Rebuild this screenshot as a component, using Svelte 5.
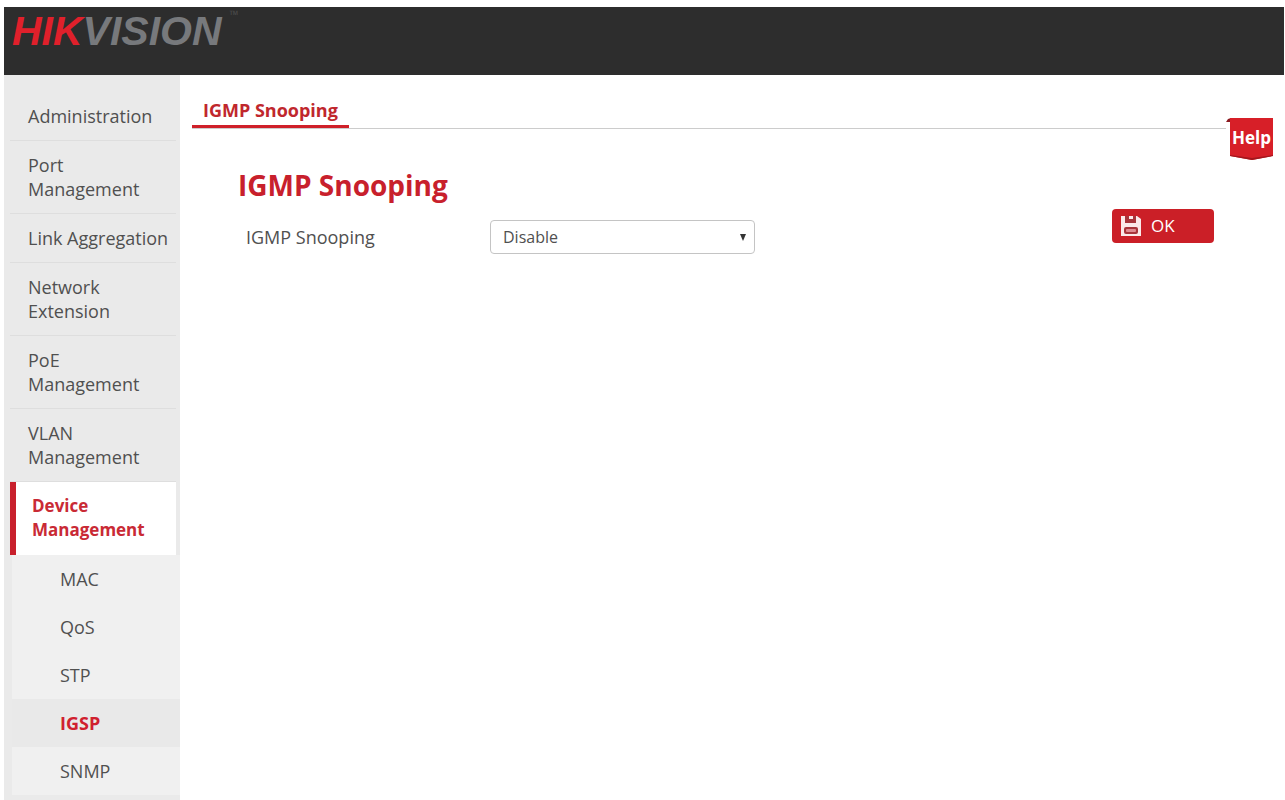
<script>
	let active = "Device Management";
	let activeSub = "IGSP";
	let snooping = "Disable";

	const menu = [
		{ label: "Administration" },
		{ label: "Port Management" },
		{ label: "Link Aggregation" },
		{ label: "Network Extension" },
		{ label: "PoE Management" },
		{ label: "VLAN Management" },
		{
			label: "Device Management",
			children: ["MAC", "QoS", "STP", "IGSP", "SNMP"],
		},
	];
</script>

<div class="page">
	<header>
		<span class="logo"><span class="hik">HIK</span>VISION</span>
		<span class="tm">™</span>
	</header>

	<div class="body">
		<nav class="sidebar">
			<ul class="menu">
				{#each menu as item (item.label)}
					<li>
						<a
							href="#menu"
							class="item"
							class:active={item.label === active}
							on:click|preventDefault={() => (active = item.label)}
						>
							{item.label}
						</a>
						{#if item.children && item.label === active}
							<ul class="submenu">
								{#each item.children as child (child)}
									<li>
										<a
											href="#submenu"
											class:current={child === activeSub}
											on:click|preventDefault={() => (activeSub = child)}
										>
											{child}
										</a>
									</li>
								{/each}
							</ul>
						{/if}
					</li>
				{/each}
			</ul>
		</nav>

		<main>
			<div class="top">
				<div class="tabs">
					<a href="#igmp" class="tab">IGMP Snooping</a>
				</div>
				<button class="help" type="button">
					<svg viewBox="0 0 47 43" aria-hidden="true">
						<path d="M0 4 L2 1 L5 0 V4 Z" fill="#8c1a20" />
						<path d="M4 0 H47 V38 L26 42 L4 38 Z" fill="#d71f28" />
						<path d="M4 37 L26 40 L47 37 V38 L26 42 L4 38 Z" fill="#a3161d" />
					</svg>
					<span>Help</span>
				</button>
			</div>

			<form on:submit|preventDefault>
				<div class="fields">
					<h1>IGMP Snooping</h1>
					<div class="row">
						<label for="snooping">IGMP Snooping</label>
						<div class="select">
							<select id="snooping" bind:value={snooping}>
								<option>Disable</option>
								<option>Enable</option>
							</select>
							<svg viewBox="0 0 8 8" aria-hidden="true">
								<path d="M1 1 H7 L4 8 Z" fill="#333" />
							</svg>
						</div>
					</div>
				</div>
				<button class="ok" type="submit">
					<svg viewBox="0 0 22 20" aria-hidden="true">
						<path d="M1 0 H17 L21 3 V20 H1 Z" fill="#fbe9e9" />
						<path d="M5 0 H9 V3 H13 V0 H16 V7 H5 Z" fill="#a8343a" />
						<rect x="4" y="11" width="14" height="7" rx="2" fill="#a8343a" />
						<rect x="6" y="13" width="10" height="3" rx="1" fill="#e08a90" />
					</svg>
					OK
				</button>
			</form>
		</main>
	</div>
</div>

<style>
	:global(body) {
		background: #fff;
	}

	.page {
		box-sizing: border-box;
		display: flex;
		flex-direction: column;
		min-height: 100vh;
		padding: 7px 1px 0 4px;
		font-family: "Open Sans", "Noto Sans", sans-serif;
		font-size: 18px;
		line-height: 24px;
		color: #505050;
	}

	header {
		display: flex;
		align-items: flex-start;
		gap: 8px;
		height: 68px;
		padding: 0 8px;
		box-sizing: border-box;
		background: #2d2d2d;
	}

	.logo {
		font: italic bold 41px/48px "Liberation Sans", Arial, sans-serif;
		color: #77797c;
	}

	.hik {
		color: #e0202b;
	}

	.tm {
		font-size: 12px;
		line-height: 16px;
		color: #4c4c4c;
	}

	.body {
		display: flex;
		flex: 1;
	}

	a {
		color: inherit;
		text-decoration: none;
	}

	ul {
		list-style: none;
		margin: 0;
		padding: 0;
	}

	.sidebar {
		flex: none;
		box-sizing: border-box;
		width: 176px;
		padding: 17px 0 3px 6px;
		background: #eaeaea;
	}

	.item {
		display: block;
		margin-right: 4px;
		padding: 12px 4px 12px 18px;
		border-bottom: 1px solid #dedede;
	}

	.item.active {
		padding: 12px 28px 13px 16px;
		border-bottom: 0;
		border-left: 6px solid #c8202c;
		background: #fff;
		font-size: 17px;
		font-weight: bold;
		color: #c92a35;
	}

	.submenu {
		margin-left: 2px;
		background: #f0f0f0;
	}

	.submenu a {
		display: block;
		padding: 12px 0 12px 48px;
	}

	.submenu .current {
		background: #e9e9e9;
		font-weight: bold;
		color: #d0202f;
	}

	main {
		flex: 1;
		padding: 22px 11px 0 12px;
	}

	.top {
		display: flex;
		align-items: flex-start;
	}

	.tabs {
		display: flex;
		flex: 1;
		height: 31px;
		border-bottom: 1px solid #ccc;
	}

	.tab {
		padding: 1px 11px 3px;
		border-bottom: 3px solid #cf2029;
		font-weight: bold;
		color: #c0272d;
	}

	button {
		border: 0;
		font: inherit;
		font-size: 17px;
		color: #fff;
		cursor: pointer;
	}

	.help {
		display: grid;
		width: 47px;
		height: 43px;
		margin-top: 21px;
		padding: 0;
		background: none;
		font-weight: bold;
	}

	.help svg,
	.help span {
		grid-area: 1 / 1;
	}

	.help span {
		padding: 8px 0 0 4px;
	}

	form {
		display: flex;
		justify-content: space-between;
		align-items: flex-start;
		padding: 8px 59px 0 46px;
	}

	h1 {
		margin: 0;
		font-size: 28px;
		line-height: 32px;
		color: #c8202c;
	}

	.row {
		display: flex;
		align-items: center;
		margin-top: 19px;
		padding-left: 8px;
	}

	label {
		width: 244px;
	}

	.select {
		display: grid;
		align-items: center;
		width: 265px;
	}

	.select svg {
		grid-area: 1 / 1;
		justify-self: end;
		width: 8px;
		height: 8px;
		margin-right: 8px;
		pointer-events: none;
	}

	select {
		grid-area: 1 / 1;
		appearance: none;
		height: 34px;
		padding: 0 12px;
		border: 1px solid #c4c4c4;
		border-radius: 4px;
		background: #fff;
		font: inherit;
		font-size: 16px;
		color: #505050;
	}

	.ok {
		display: flex;
		align-items: center;
		gap: 9px;
		width: 102px;
		height: 34px;
		margin-top: 40px;
		padding: 0 8px;
		border-radius: 4px;
		background: #cb1f27;
	}

	.ok svg {
		width: 22px;
		height: 20px;
	}
</style>
